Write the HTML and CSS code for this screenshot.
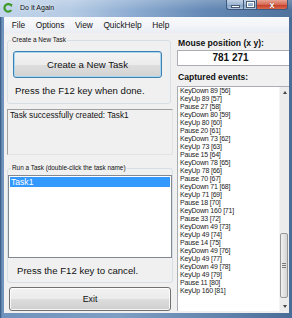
FILE: index.html
```html
<!DOCTYPE html>
<html>
<head>
<meta charset="utf-8">
<link rel="stylesheet" href="styles.css">
</head>
<body>
<div class="win">
  <div class="titlebar">
    <svg class="appicon" width="10" height="10" viewBox="0 0 10 10">
      <path d="M8 2.2 A3.8 3.8 0 1 0 8.3 7.2" fill="none" stroke="#3f9a2a" stroke-width="2.2"/>
      <path d="M6.2 0.6 L9.6 1.2 L8.4 4.2 Z" fill="#3f9a2a"/>
    </svg>
    <span class="title">Do It Again</span>
    <div class="caps">
      <div class="cap min"><span class="glyph-min"></span></div>
      <div class="cap max"><span class="glyph-max"></span></div>
      <div class="cap close"><span class="glyph-x">x</span></div>
    </div>
  </div>
  <div class="client">
    <div class="menubar">
      <span class="mi">File</span>
      <span class="mi">Options</span>
      <span class="mi">View</span>
      <span class="mi">QuickHelp</span>
      <span class="mi">Help</span>
    </div>
    <div class="main">
      <div class="left">
        <fieldset class="grp grp1">
          <legend>Create a New Task</legend>
          <button class="btn big">Create a New Task</button>
          <p class="hint hint1">Press the F12 key when done.</p>
        </fieldset>
        <div class="status">Task successfully created: Task1</div>
        <fieldset class="grp grp2">
          <legend>Run a Task (double-click the task name)</legend>
          <div class="tasklist"><div class="sel">Task1</div></div>
          <p class="hint hint2">Press the F12 key to cancel.</p>
        </fieldset>
        <button class="btn exit">Exit</button>
      </div>
      <div class="right">
        <div class="lbl lbl1">Mouse position (x y):</div>
        <div class="posbox">781 271</div>
        <div class="lbl lbl2">Captured events:</div>
        <div class="events">
          <div class="evlines">
            <div>KeyDown 89 [56]</div>
            <div>KeyUp 89 [57]</div>
            <div>Pause 27 [58]</div>
            <div>KeyDown 80 [59]</div>
            <div>KeyUp 80 [60]</div>
            <div>Pause 20 [61]</div>
            <div>KeyDown 73 [62]</div>
            <div>KeyUp 73 [63]</div>
            <div>Pause 15 [64]</div>
            <div>KeyDown 78 [65]</div>
            <div>KeyUp 78 [66]</div>
            <div>Pause 70 [67]</div>
            <div>KeyDown 71 [68]</div>
            <div>KeyUp 71 [69]</div>
            <div>Pause 18 [70]</div>
            <div>KeyDown 160 [71]</div>
            <div>Pause 33 [72]</div>
            <div>KeyDown 49 [73]</div>
            <div>KeyUp 49 [74]</div>
            <div>Pause 14 [75]</div>
            <div>KeyDown 49 [76]</div>
            <div>KeyUp 49 [77]</div>
            <div>KeyDown 49 [78]</div>
            <div>KeyUp 49 [79]</div>
            <div>Pause 11 [80]</div>
            <div>KeyUp 160 [81]</div>
          </div>
          <div class="vscroll">
            <div class="arrow up"></div>
            <div class="track">
              <div class="thumb"><span class="grip"></span></div>
            </div>
            <div class="arrow down"></div>
          </div>
        </div>
      </div>
    </div>
  </div>
</div>
</body>
</html>
```

FILE: styles.css
```css
* { box-sizing: border-box; }
html, body { margin: 0; padding: 0; }
body {
  width: 292px;
  height: 318px;
  overflow: hidden;
  font-family: "Liberation Sans", Arial, sans-serif;
  color: #000;
}
.win {
  width: 292px;
  height: 318px;
  display: flex;
  flex-direction: column;
  background: linear-gradient(to right, #2f5179 0px, #6f93bd 2px, #7e9ec4 40%, #5d80aa 80%, #4a6d98 100%);
  padding: 0 3px 5px 4px;
}
.titlebar {
  height: 17px;
  margin: 0 -3px 0 -4px;
  display: flex;
  align-items: flex-start;
  background:
    linear-gradient(to bottom, rgba(255,255,255,0.2), rgba(255,255,255,0) 60%),
    linear-gradient(100deg, #c2d5ea 0%, #b4cae3 25%, #8eadd2 45%, #6489b5 70%, #4f739c 100%);
}
.appicon { margin: 3px 0 0 3px; }
.title {
  font-size: 7px;
  line-height: 9px;
  margin: 3px 0 0 7px;
  color: #111;
  text-shadow: 0 0 4px rgba(255,255,255,0.9);
}
.caps {
  margin-left: auto;
  margin-right: 4px;
  display: flex;
  height: 10px;
}
.cap {
  height: 10px;
  border: 1px solid #3d5a7e;
  border-top: none;
  display: flex;
  align-items: center;
  justify-content: center;
}
.min {
  width: 17px;
  border-radius: 0 0 0 3px;
  background: linear-gradient(#c3d3e6, #9db6d3 50%, #7f9dc2 51%, #a9c1dc);
  border-right: none;
}
.max {
  width: 14px;
  background: linear-gradient(#c3d3e6, #9db6d3 50%, #7f9dc2 51%, #a9c1dc);
}
.close {
  width: 31px;
  border-left: none;
  border-radius: 0 0 3px 0;
  background: linear-gradient(#e8a493, #d86a55 50%, #c23a24 51%, #d9694f);
}
.glyph-min {
  width: 7px;
  height: 1px;
  background: #fff;
  border: 1px solid #4a5d74;
  margin-top: 4px;
  box-sizing: content-box;
}
.glyph-max {
  border: 1px solid #fff;
  outline: 1px solid #4a5d74;
  box-sizing: content-box;
  width: 5px;
  height: 3px;
}
.glyph-x {
  color: #fff;
  font-weight: bold;
  font-size: 9px;
  line-height: 8px;
  text-shadow: 0 0 1px #5a1a10;
}
.client {
  flex: 1;
  display: flex;
  flex-direction: column;
  background: #f0f0f0;
}
.menubar {
  height: 16px;
  display: flex;
  align-items: center;
  padding-left: 2.5px;
  font-size: 8.3px;
  background: linear-gradient(#f8f9fc, #f3f5f9 50%, #e9edf3);
  color: #111;
}
.mi { padding: 0 5.3px; }
.main {
  flex: 1;
  display: flex;
}
.left {
  width: 171px;
  display: flex;
  flex-direction: column;
}
.grp {
  margin: 0;
  padding: 0;
  border: 1px solid #d5dfe5;
  border-radius: 3px;
  min-width: 0;
}
.grp legend {
  font-size: 6.4px;
  line-height: 8px;
  padding: 0 1px;
  margin-left: 3px;
  color: #111;
}
.grp1 {
  margin: 3px 0 0 3px;
  width: 164px;
  padding-bottom: 6px;
  display: flex;
  flex-direction: column;
}
.btn {
  font-family: "Liberation Sans", Arial, sans-serif;
  color: #111;
  border: 1px solid #707070;
  border-radius: 3px;
  background: linear-gradient(#f2f2f2, #ebebeb 50%, #dddddd 51%, #cfcfcf);
  box-shadow: inset 0 0 0 1px rgba(255,255,255,0.8);
  padding: 0;
}
.big {
  margin: 7px 0 0 5px;
  width: 149px;
  height: 27px;
  font-size: 9.6px;
  border-color: #3c7fb1;
  background: linear-gradient(#f4f4f4, #ececec 50%, #dedede 51%, #d2d2d2);
  box-shadow: inset 0 0 0 1px #a9d7f2;
}
.hint {
  margin: 0;
  font-size: 9.6px;
  line-height: 12px;
  color: #111;
}
.hint1 { margin: 7px 0 0 7px; }
.status {
  margin: 5px 0 0 3px;
  width: 166px;
  height: 46px;
  border: 1px solid #a0a0a0;
  border-right-color: #e3e3e3;
  border-bottom-color: #e3e3e3;
  background: #f0f0f0;
  font-size: 8.2px;
  line-height: 10px;
  padding: 1px 0 0 2px;
  color: #111;
}
.grp2 {
  margin: 9px 0 0 3px;
  width: 166px;
  padding-bottom: 5px;
  display: flex;
  flex-direction: column;
}
.tasklist {
  margin: 3px 0 0 0;
  height: 83px;
  background: #fff;
  border: 1px solid #828790;
  padding: 1px 1px;
}
.sel {
  background: #3399ff;
  color: #fff;
  font-size: 8.6px;
  line-height: 10px;
  padding-left: 1px;
}
.hint2 { margin: 7px 0 0 9px; }
.exit {
  margin: 4px 0 0 5px;
  width: 162px;
  height: 24px;
  font-size: 8.8px;
}
.right {
  flex: 1;
  display: flex;
  flex-direction: column;
  padding-left: 2px;
}
.lbl {
  font-weight: bold;
  font-size: 8.6px;
  line-height: 10px;
  color: #111;
  padding-left: 1px;
}
.lbl1 { margin-top: 5px; }
.posbox {
  margin-top: 2px;
  height: 16px;
  background: #fff;
  border: 1px solid #abadb3;
  border-right: none;
  font-weight: bold;
  font-size: 10px;
  line-height: 14px;
  text-align: center;
  padding-right: 6px;
  color: #111;
}
.lbl2 { margin-top: 6px; }
.events {
  margin-top: 4px;
  height: 225px;
  background: #fff;
  border: 1px solid #abadb3;
  border-right: none;
  border-bottom: none;
  display: flex;
}
.evlines {
  flex: 1;
  font-size: 7px;
  line-height: 8px;
  letter-spacing: -0.2px;
  color: #222;
  padding-left: 2px;
}
.vscroll {
  width: 10px;
  background: #ececec;
  display: flex;
  flex-direction: column;
  border-left: 1px solid #f4f4f4;
}
.arrow {
  height: 10px;
  display: flex;
  align-items: center;
  justify-content: center;
}
.arrow::after {
  content: "";
  border-left: 2.5px solid transparent;
  border-right: 2.5px solid transparent;
}
.up::after { border-bottom: 3px solid #444; }
.down::after { border-top: 3px solid #444; }
.track {
  flex: 1;
  display: flex;
  flex-direction: column;
  justify-content: flex-end;
  padding-bottom: 3px;
}
.thumb {
  height: 65px;
  margin: 0 1px 0 0;
  border: 1px solid #979797;
  border-radius: 2px;
  background: linear-gradient(to right, #f0f0f0, #e3e3e3 50%, #d6d6d6);
  display: flex;
  align-items: center;
  justify-content: center;
}
.grip {
  width: 4px;
  height: 5px;
  background: repeating-linear-gradient(#7a7a7a 0 1px, transparent 1px 2px);
}
```
